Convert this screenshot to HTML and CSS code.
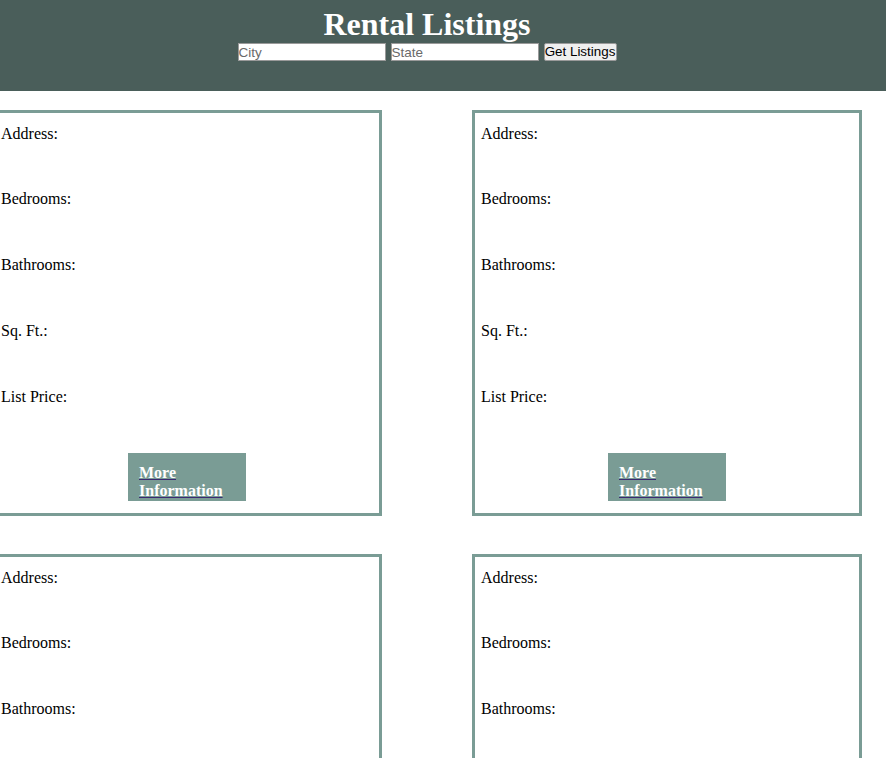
FILE: index.html
```html
<!DOCTYPE html>
<html>
<head>
<meta charset="utf-8">
<link rel="stylesheet" href="styles.css">
</head>
<body>
<header class="topbar">
  <div class="topbar-inner">
    <h1 class="title">Rental Listings</h1>
    <div class="search">
      <input class="field" type="text" placeholder="City">
      <input class="field" type="text" placeholder="State">
      <button class="go" type="button">Get Listings</button>
    </div>
  </div>
</header>
<main class="grid">
  <section class="card">
    <p class="label">Address:</p>
    <p class="label">Bedrooms:</p>
    <p class="label">Bathrooms:</p>
    <p class="label">Sq. Ft.:</p>
    <p class="label">List Price:</p>
    <a class="more" href="#"><span>More Information</span></a>
  </section>
  <section class="card">
    <p class="label">Address:</p>
    <p class="label">Bedrooms:</p>
    <p class="label">Bathrooms:</p>
    <p class="label">Sq. Ft.:</p>
    <p class="label">List Price:</p>
    <a class="more" href="#"><span>More Information</span></a>
  </section>
  <section class="card">
    <p class="label">Address:</p>
    <p class="label">Bedrooms:</p>
    <p class="label">Bathrooms:</p>
    <p class="label">Sq. Ft.:</p>
    <p class="label">List Price:</p>
    <a class="more" href="#"><span>More Information</span></a>
  </section>
  <section class="card">
    <p class="label">Address:</p>
    <p class="label">Bedrooms:</p>
    <p class="label">Bathrooms:</p>
    <p class="label">Sq. Ft.:</p>
    <p class="label">List Price:</p>
    <a class="more" href="#"><span>More Information</span></a>
  </section>
</main>
</body>
</html>
```

FILE: styles.css
```css
html, body {
  margin: 0;
  padding: 0;
  background: #ffffff;
  font-family: "Liberation Serif", "Times New Roman", serif;
  font-size: 16px;
  color: #000;
}

.topbar {
  background: #4a5e5a;
  height: 91px;
}

.topbar-inner {
  width: 870px;
  margin-left: -8px;
  padding-top: 6px;
  display: flex;
  flex-direction: column;
  align-items: center;
}

.title {
  margin: 0;
  font-size: 32px;
  line-height: 37px;
  font-weight: bold;
  color: #ffffff;
}

.search {
  display: flex;
  gap: 5px;
  align-items: flex-start;
}

.field {
  box-sizing: border-box;
  width: 148px;
  height: 18px;
  margin: 0;
  padding: 0;
  border: 1px solid #9a9a9a;
  background: #fff;
  font-family: "Liberation Sans", Arial, sans-serif;
  font-size: 13.5px;
}

.field::placeholder {
  color: #6a6a6a;
}

.go {
  box-sizing: border-box;
  height: 18px;
  width: 73px;
  margin: 0;
  padding: 0;
  border: 1px solid #9a9a9a;
  border-radius: 2px;
  background: #efefef;
  color: #000;
  font-family: "Liberation Sans", Arial, sans-serif;
  font-size: 13.4px;
  line-height: 14px;
}

.grid {
  width: 870px;
  margin: 19px 0 0 -8px;
  display: grid;
  grid-template-columns: 390px 390px;
  column-gap: 90px;
  row-gap: 38px;
}

.card {
  box-sizing: border-box;
  border: 3px solid #7a9c95;
  padding: 12px 6px 12px 6px;
  display: flex;
  flex-direction: column;
}

.label {
  margin: 0 0 48px 0;
  line-height: 18px;
}

.label:first-of-type {
  margin-bottom: 47px;
}

.label:nth-last-of-type(1) {
  margin-bottom: 47px;
}

.more {
  align-self: center;
  box-sizing: border-box;
  width: 118px;
  height: 48px;
  padding: 11px 11px 0 11px;
  background: #7a9c95;
  font-weight: bold;
  line-height: 18px;
  text-decoration: underline;
  text-decoration-color: #3b2a72;
  color: #3b2a72;
}

.more span {
  color: #ffffff;
}
```
